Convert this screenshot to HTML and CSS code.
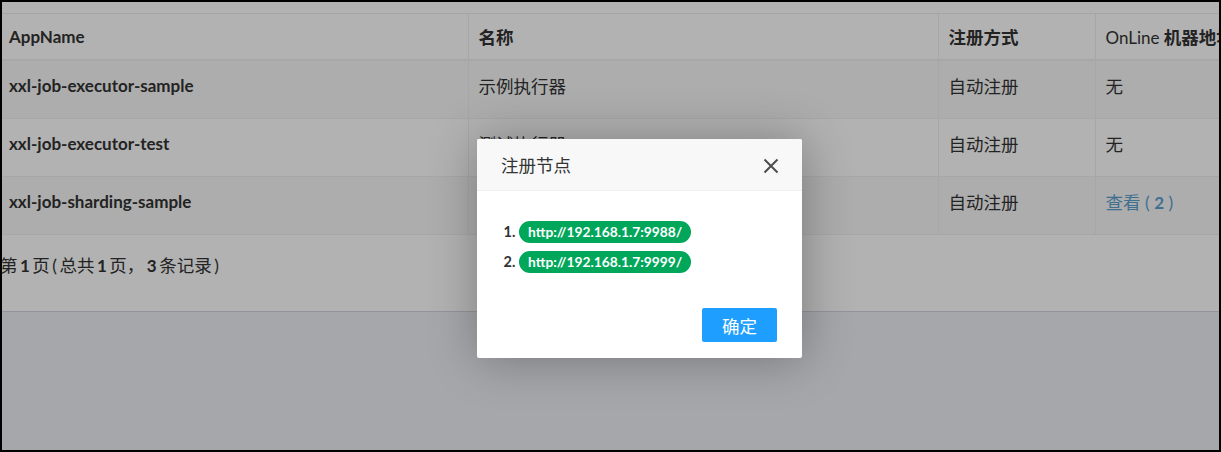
FILE: index.html
```html
<!DOCTYPE html>
<html lang="zh">
<head>
<meta charset="utf-8">
<title>执行器管理</title>
<link rel="stylesheet" href="styles.css">
</head>
<body>
<div class="frame">
  <div class="box">
    <table class="grid">
      <colgroup>
        <col class="c1"><col class="c2"><col class="c3"><col class="c4">
      </colgroup>
      <thead>
        <tr>
          <th>AppName</th>
          <th>名称</th>
          <th>注册方式</th>
          <th><span class="thin">OnLine</span> 机器地址</th>
        </tr>
      </thead>
      <tbody>
        <tr class="odd">
          <td class="app">xxl-job-executor-sample</td>
          <td>示例执行器</td>
          <td>自动注册</td>
          <td>无</td>
        </tr>
        <tr>
          <td class="app">xxl-job-executor-test</td>
          <td>测试执行器</td>
          <td>自动注册</td>
          <td>无</td>
        </tr>
        <tr class="odd">
          <td class="app">xxl-job-sharding-sample</td>
          <td>分片执行器</td>
          <td>自动注册</td>
          <td><a class="link" href="#">查看 ( <b>2</b> )</a></td>
        </tr>
      </tbody>
    </table>
    <div class="pager"><span>第 <b>1</b> 页 ( 总共 <b>1</b> 页， <b>3</b> 条记录 )</span></div>
  </div>

  <div class="shade"></div>

  <div class="layer">
    <div class="layer-title">
      <span>注册节点</span>
      <svg class="close" width="16" height="16" viewBox="0 0 16 16" aria-hidden="true">
        <path d="M1.5 1.5 L14.5 14.5 M14.5 1.5 L1.5 14.5" stroke="#4d4d4d" stroke-width="2" fill="none"/>
      </svg>
    </div>
    <div class="layer-body">
      <ol class="nodes">
        <li><span class="badge">http://192.168.1.7:9988/</span></li>
        <li><span class="badge">http://192.168.1.7:9999/</span></li>
      </ol>
    </div>
    <div class="layer-btns">
      <a class="btn" href="#">确定</a>
    </div>
  </div>
</div>
</body>
</html>
```

FILE: styles.css
```css
html, body {
  margin: 0;
  padding: 0;
  background: #000;
}

.frame {
  position: relative;
  width: 1221px;
  height: 452px;
  box-sizing: border-box;
  border: 2px solid #000;
  background: #ecf0f5;
  overflow: hidden;
  font-family: Lato, "Noto Sans CJK SC", sans-serif;
  font-size: 17.5px;
  color: #333;
}

.box {
  background: #fff;
  padding-top: 11px;
  height: 310px;
  box-sizing: border-box;
  border-bottom: 1px solid #d2d6de;
  width: 1500px;
}

.grid {
  border-collapse: collapse;
  table-layout: fixed;
  width: 1500px;
}

.grid .c1 { width: 466px; }
.grid .c2 { width: 470px; }
.grid .c3 { width: 157px; }
.grid .c4 { width: 407px; }

.grid th,
.grid td {
  text-align: left;
  padding: 0 0 0 10px;
  border: 1px solid #f0f0f0;
  border-top: 0;
  white-space: nowrap;
}

.grid th:first-child,
.grid td:first-child {
  border-left: 0;
  padding-left: 7px;
}

.grid thead tr {
  border-top: 1px solid #ececec;
}

.grid th {
  height: 44px;
  padding-bottom: 1px;
  font-weight: 700;
  border-bottom: 2px solid #f0f0f0;
}

.grid th:first-child { font-size: 17px; }

.grid th .thin { font-weight: 400; font-size: 17px; }

.grid td {
  height: 48px;
  padding-bottom: 9px;
  font-weight: 400;
}

.grid td.app {
  font-weight: 700;
  font-size: 17px;
}

.grid tr.odd td { background: #f8f8f8; }

.link {
  color: #5c9fcf;
  text-decoration: none;
}
.link b { font-weight: 700; font-size: 17px; }

.pager {
  height: 76px;
  box-sizing: border-box;
  padding-top: 20px;
  margin-left: -2px;
  line-height: 22px;
  word-spacing: -2px;
}
.pager b { font-weight: 700; font-size: 17px; }

.shade {
  position: absolute;
  inset: 0;
  background: rgba(0, 0, 0, 0.3);
}

.layer {
  position: absolute;
  left: 475px;
  top: 137px;
  width: 325px;
  height: 219px;
  background: #fff;
  border-radius: 2px;
  box-shadow: 1px 1px 50px rgba(0, 0, 0, 0.3);
  display: flex;
  flex-direction: column;
}

.layer-title {
  height: 52px;
  box-sizing: border-box;
  background: #f8f8f8;
  border-bottom: 1px solid #eee;
  border-radius: 2px 2px 0 0;
  display: flex;
  align-items: center;
  justify-content: space-between;
  padding: 0 23px 0 24px;
  font-size: 17.5px;
  color: #333;
}

.close { display: block; margin-top: 2px; }

.layer-body {
  padding: 30px 24px 0 24px;
  flex: 1;
}

.nodes {
  margin: 0;
  padding: 0 0 0 18px;
  font-weight: 700;
  font-size: 14.5px;
}

.nodes li {
  height: 30px;
  line-height: 22px;
}

.badge {
  display: inline-block;
  background: #00a65a;
  color: #fff;
  font-weight: 700;
  font-size: 13.8px;
  height: 22px;
  line-height: 22px;
  padding: 0 9px;
  border-radius: 11px;
}

.layer-btns {
  display: flex;
  justify-content: flex-end;
  padding: 0 25px 16px 0;
}

.btn {
  display: inline-flex;
  align-items: center;
  justify-content: center;
  width: 75px;
  height: 34px;
  background: #1e9fff;
  color: #fff;
  border-radius: 2px;
  text-decoration: none;
  font-size: 17.5px;
}
```
